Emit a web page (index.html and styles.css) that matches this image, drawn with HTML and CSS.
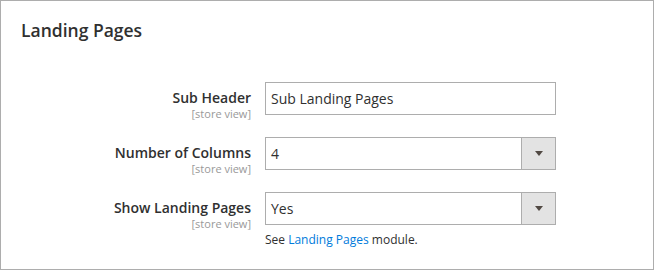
FILE: index.html
```html
<!DOCTYPE html>
<html lang="en">
<head>
    <meta charset="utf-8">
    <title>Landing Pages</title>
    <link rel="stylesheet" href="styles.css">
</head>
<body>
    <section class="panel">
        <h2 class="panel-title">Landing Pages</h2>

        <div class="form">
            <div class="row">
                <label class="label">
                    <span>Sub Header</span>
                    <small>[store view]</small>
                </label>
                <div class="control">
                    <input class="text-input" type="text" value="Sub Landing Pages">
                </div>
            </div>

            <div class="row">
                <label class="label">
                    <span>Number of Columns</span>
                    <small>[store view]</small>
                </label>
                <div class="control">
                    <div class="select">
                        <span class="select-value">4</span>
                        <span class="select-btn"><i class="arrow"></i></span>
                    </div>
                </div>
            </div>

            <div class="row">
                <label class="label">
                    <span>Show Landing Pages</span>
                    <small>[store view]</small>
                </label>
                <div class="control">
                    <div class="select">
                        <span class="select-value">Yes</span>
                        <span class="select-btn"><i class="arrow"></i></span>
                    </div>
                    <p class="note">See <a href="#">Landing Pages</a> module.</p>
                </div>
            </div>
        </div>
    </section>
</body>
</html>
```

FILE: styles.css
```css
body {
    margin: 0;
    background: #fff;
    font-family: "Open Sans", "Liberation Sans", sans-serif;
    color: #303030;
}

.panel {
    box-sizing: border-box;
    width: 654px;
    height: 270px;
    border: 1px solid #adadad;
    padding: 17px 20px 0 20px;
}

.panel-title {
    margin: 0;
    font-size: 17.5px;
    font-weight: 600;
    line-height: 24px;
    color: #303030;
}

.form {
    margin-top: 40px;
    display: grid;
    row-gap: 22px;
}

.row {
    display: grid;
    grid-template-columns: 230px 291px;
    column-gap: 14px;
    align-items: start;
}

.label {
    box-sizing: border-box;
    height: 33px;
    display: flex;
    flex-direction: column;
    align-items: flex-end;
    padding-top: 6px;
    text-align: right;
}

.label span {
    font-size: 14px;
    font-weight: 600;
    line-height: 19px;
}

.label small {
    font-size: 11px;
    line-height: 13px;
    color: #999;
}

.text-input {
    box-sizing: border-box;
    display: block;
    width: 100%;
    height: 33px;
    margin: 0;
    padding: 0 5px;
    border: 1px solid #adadad;
    font-family: inherit;
    font-size: 14px;
    color: #303030;
    outline: none;
}

.select {
    box-sizing: border-box;
    display: flex;
    height: 33px;
    border: 1px solid #adadad;
}

.select-value {
    flex: 1;
    padding: 0 5px;
    font-size: 14px;
    line-height: 31px;
}

.select-btn {
    width: 33px;
    display: flex;
    align-items: center;
    justify-content: center;
    background: #e3e3e3;
    border-left: 1px solid #adadad;
}

.arrow {
    width: 0;
    height: 0;
    border-left: 4px solid transparent;
    border-right: 4px solid transparent;
    border-top: 5px solid #514943;
}

.note {
    margin: 6px 0 0 0;
    font-size: 12px;
    line-height: 17px;
}

.note a {
    color: #007bdb;
    text-decoration: none;
}
```
